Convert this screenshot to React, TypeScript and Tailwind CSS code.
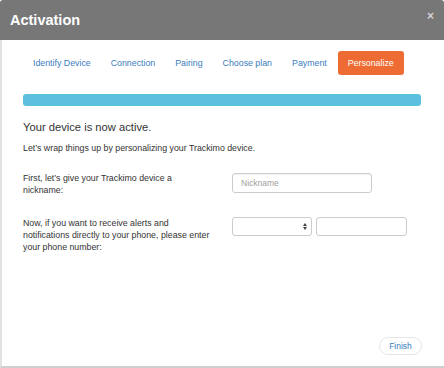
import React from "react";

export default function App() {
  const font = { fontFamily: '"Liberation Sans", Arial, Helvetica, sans-serif' };
  const tabs = ["Identify Device", "Connection", "Pairing", "Choose plan", "Payment"];
  return (
    <div style={font} className="w-[444px] h-[368px] bg-white flex flex-col overflow-hidden">
      <div className="h-[40px] shrink-0 bg-[#777777] flex items-center justify-between pl-[10px] pr-[10px] rounded-tl-[3px] rounded-tr-[3px]">
        <span className="text-white font-bold text-[14.5px] leading-none">Activation</span>
        <span className="text-[#d4d4d4] font-bold text-[12px] leading-none -mt-[8px]">×</span>
      </div>
      <div className="flex-1 flex flex-col border-l-[2px] border-[#e2e2e2] border-b-[2px] border-b-[#cfcfcf] pl-[21px] pr-[23px]">
        <div className="flex items-center mt-[11px] h-[24px] text-[8.8px] leading-none">
          {tabs.map((t) => (
            <span key={t} className="px-[10px] text-[#3b7dc0]">{t}</span>
          ))}
          <span className="ml-[1px] h-[24px] px-[10px] flex items-center rounded-[3px] bg-[#ee6b33] text-white">Personalize</span>
        </div>
        <div className="mt-[19px] h-[12px] rounded-[3px] bg-[#5bc0de]" />
        <div className="mt-[14px] text-[11.2px] leading-[14px] text-[#333]">Your device is now active.</div>
        <div className="mt-[8px] text-[8.8px] leading-[12px] text-[#333]">
          Let’s wrap things up by personalizing your Trackimo device.
        </div>
        <div className="mt-[18px] flex items-start">
          <div className="w-[190px] text-[8.8px] leading-[12px] text-[#333]">
            First, let’s give your Trackimo device a nickname:
          </div>
          <div className="ml-[19px] mt-[1px] w-[140px] h-[20px] border border-[#cccccc] rounded-[3px] shadow-[inset_0_1px_1px_rgba(0,0,0,0.06)] flex items-center pl-[8px] text-[8.5px] text-[#a0a0a0]">
            Nickname
          </div>
        </div>
        <div className="mt-[21px] flex items-start">
          <div className="w-[190px] text-[8.8px] leading-[12px] text-[#333]">
            Now, if you want to receive alerts and notifications directly to your phone, please enter your phone number:
          </div>
          <div className="ml-[19px] w-[80px] h-[19px] border border-[#cccccc] rounded-[3px] flex items-center justify-end pr-[4px]">
            <svg width="4" height="7" viewBox="0 0 4 7">
              <path d="M0 3 L2 0 L4 3 Z" fill="#444" />
              <path d="M0 4 L2 7 L4 4 Z" fill="#444" />
            </svg>
          </div>
          <div className="ml-[4px] w-[91px] h-[19px] border border-[#cccccc] rounded-[3px]" />
        </div>
        <div className="mt-auto mb-[11px] flex justify-end -mr-[1px]">
          <span className="w-[43px] h-[18px] flex items-center justify-center rounded-full border border-[#e6e6e6] text-[8.5px] text-[#3b7dc0]">
            Finish
          </span>
        </div>
      </div>
    </div>
  );
}
